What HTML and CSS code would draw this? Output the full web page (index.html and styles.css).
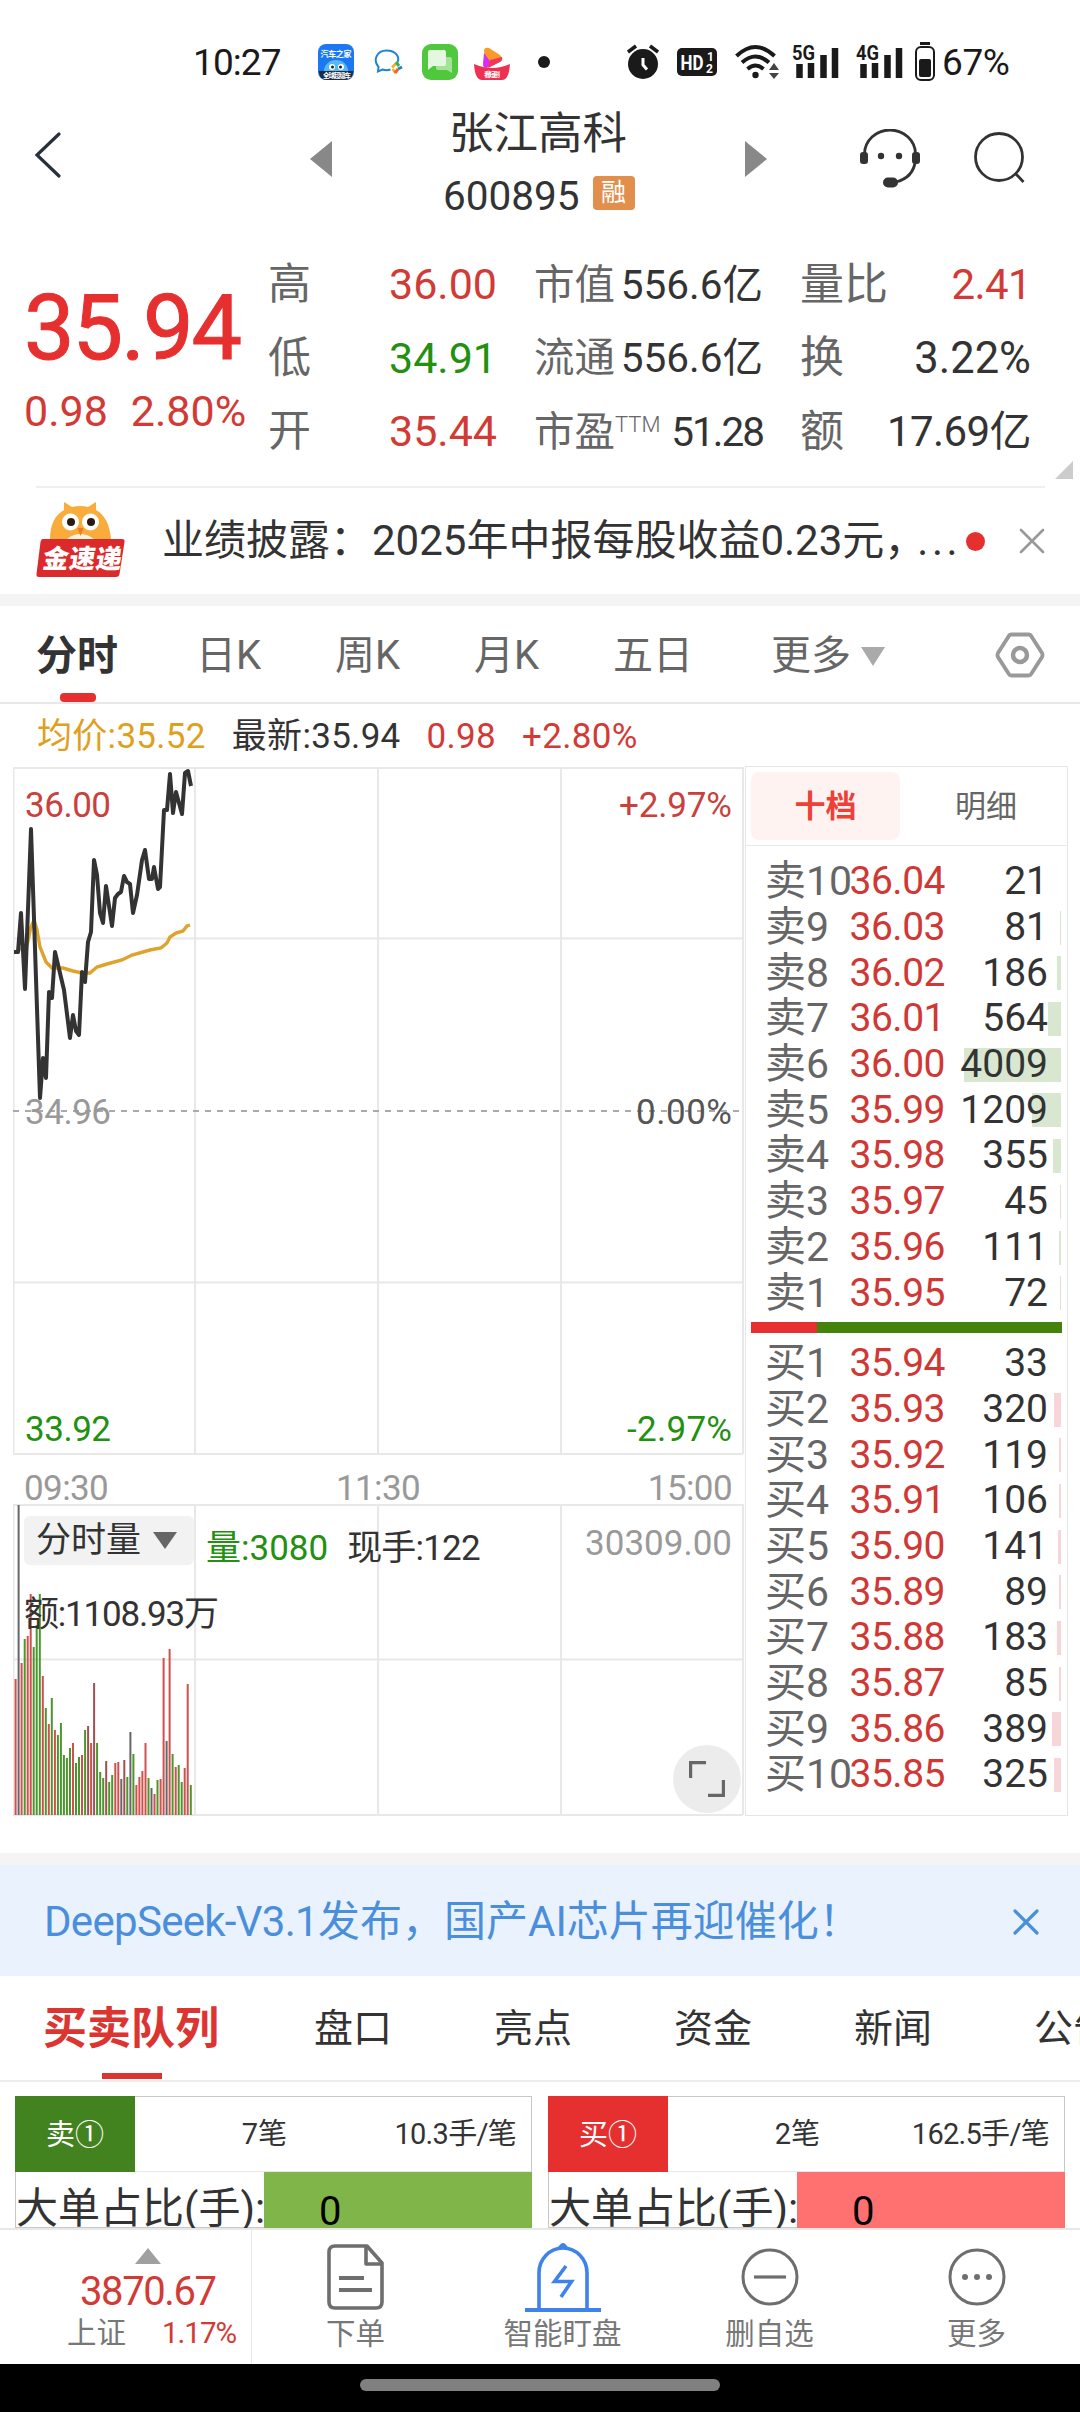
FILE: index.html
```html
<!DOCTYPE html>
<html lang="zh-CN">
<head>
    <meta charset="UTF-8">
    <meta name="viewport" content="width=device-width, initial-scale=1.0">
    <title>张江高科 600895</title>
    <link rel="stylesheet" href="styles.css">
</head>
<body>
    <div class="status">
        <span class="clock">10:27</span>
        <svg class="app1" width="36" height="36" viewBox="0 0 36 36">
            <rect width="36" height="36" rx="8" fill="#1b78f2"/>
            <text x="18" y="13" text-anchor="middle" font-size="8" font-weight="700" fill="#fff" textLength="31">汽车之家</text>
            <path d="M6 27a12 11 0 0 1 24 0z" fill="#58b9f2"/>
            <circle cx="14" cy="23" r="3" fill="#fff"/><circle cx="23" cy="23" r="3" fill="#fff"/>
            <circle cx="14.500" cy="23" r="1.500" fill="#123"/><circle cx="22.500" cy="23" r="1.500" fill="#123"/>
            <path d="M1 27h34v2q-1 7-8 7H9q-7 0-8-7z" fill="#1f2c40"/>
            <text x="19" y="33.500" text-anchor="middle" font-size="6.500" font-weight="700" fill="#fff" textLength="28">全球超级车</text>
        </svg>
        <svg class="app2" width="30" height="26" viewBox="0 0 30 26">
            <path d="M16.500 20.500q-4 1.500-8 0L4 22.500l.5-4.500C-1.500 11 3 1.500 12.500 1.500S26 8 23.500 13" fill="none" stroke="#1d84d4" stroke-width="2"/>
            <path d="M22 14.500l-4 4M18.500 20l3 4" stroke="#f2b01e" stroke-width="2.500"/>
            <path d="M22 13l3 4" stroke="#3cae46" stroke-width="3"/>
            <path d="M24 20l4-2" stroke="#1d84d4" stroke-width="3"/>
            <path d="M21 24l3-4" stroke="#f2652a" stroke-width="3"/>
        </svg>
        <svg class="app3" width="36" height="36" viewBox="0 0 36 36">
            <rect width="36" height="36" rx="9" fill="#4fc83d"/>
            <path d="M16 13h12q2 0 2 2v14l-5-3h-9q-2 0-2-2v-9q0-2 2-2z" fill="#a3e398"/>
            <path d="M8 6h14q2 0 2 2v12q0 2-2 2H11l-5 4V8q0-2 2-2z" fill="#e3f8df"/>
        </svg>
        <svg class="app4" width="36" height="36" viewBox="0 0 36 36">
            <path d="M10 7q0-4 5-3l11 7q4 4 0 7l-14 6z" fill="#fb9a27"/>
            <path d="M10 9l9 12-7 3q-3 0-3-4z" fill="#d72ff0"/>
            <path d="M16 16l12-3q1 3-2 5l-12 6z" fill="#f2385a"/>
            <path d="M0 20q18 8 36 0-1 16-8 16H8Q1 36 0 20z" fill="#ee3150"/>
            <text x="18" y="33" text-anchor="middle" font-size="6.500" font-weight="700" fill="#fff" textLength="16">看短剧</text>
        </svg>
        <i class="more-dot"></i>
        <svg class="alarm" width="32" height="36" viewBox="0 0 32 36">
            <circle cx="16" cy="20" r="15" fill="#1a1a1a"/>
            <path d="M1 8l8-6M31 8l-8-6" stroke="#1a1a1a" stroke-width="3.500"/>
            <path d="M16 14v7l4 4.500" fill="none" stroke="#fff" stroke-width="3"/>
        </svg>
        <svg class="hd" width="40" height="28" viewBox="0 0 40 28">
            <rect width="40" height="28" rx="5" fill="#1a1a1a"/>
            <text x="3.500" y="21.500" font-size="20" font-weight="700" fill="#fff" textLength="23" lengthAdjust="spacingAndGlyphs">HD</text>
            <text x="30" y="13" font-size="12" font-weight="700" fill="#fff">1</text>
            <text x="29" y="25" font-size="12" font-weight="700" fill="#fff">2</text>
        </svg>
        <svg class="wifi" width="46" height="36" viewBox="0 0 46 36">
            <g fill="none" stroke="#1a1a1a" stroke-width="4">
                <path d="M1.500 12q19-18 38 0"/>
                <path d="M7 18.500q13.500-12 27 0"/>
                <path d="M12.500 25q8-7 16 0"/>
            </g>
            <circle cx="20.500" cy="31" r="3.200" fill="#1a1a1a"/>
            <path d="M39 19l5 7H34zM39 35l5-6H34z" fill="#444"/>
        </svg>
        <svg class="cell" width="48" height="44" viewBox="0 -4 48 44">
            <text x="0" y="16" font-size="20" font-weight="700" fill="#1a1a1a" textLength="23" lengthAdjust="spacingAndGlyphs">5G</text>
            <path d="M7.500 34V20M19 34V19M31.500 34V11M43 34V4" stroke="#1a1a1a" stroke-width="6.500"/>
        </svg>
        <svg class="cell" width="48" height="44" viewBox="0 -4 48 44">
            <text x="0" y="16" font-size="20" font-weight="700" fill="#1a1a1a" textLength="23" lengthAdjust="spacingAndGlyphs">4G</text>
            <path d="M7.500 34V20M19 34V19M31.500 34V11M43 34V4" stroke="#1a1a1a" stroke-width="6.500"/>
        </svg>
        <svg class="battery" width="20" height="40" viewBox="0 0 20 40">
            <path d="M5 1.500h10" stroke="#1a1a1a" stroke-width="3"/>
            <rect x="1" y="5" width="18" height="33" rx="5" fill="none" stroke="#1a1a1a" stroke-width="2"/>
            <rect x="4" y="17" width="12" height="18" rx="2" fill="#1a1a1a"/>
        </svg>
        <span class="percent">67%</span>
    </div>

    <header class="header">
        <svg class="back" width="28" height="48" viewBox="0 0 28 48"><path d="M25 3L3 24l22 21" fill="none" stroke="#28303c" stroke-width="3.200" stroke-linecap="round"/></svg>
        <svg class="prev" width="22" height="36" viewBox="0 0 22 36"><path d="M22 0v36L0 18z" fill="#888"/></svg>
        <div class="title">
            <h1>张江高科</h1>
            <p>600895<span class="badge">融</span></p>
        </div>
        <svg class="next" width="22" height="36" viewBox="0 0 22 36"><path d="M0 0v36l22-18z" fill="#888"/></svg>
        <svg class="headset" width="60" height="60" viewBox="0 0 60 60">
            <path d="M4.500 25a25.500 24 0 0 1 51 0v6q-2 18-20 22" fill="none" stroke="#333" stroke-width="2.800"/>
            <rect x="0" y="23" width="8" height="12" rx="3" fill="#333"/><rect x="52" y="23" width="8" height="12" rx="3" fill="#333"/>
            <circle cx="21" cy="27" r="3.200" fill="#333"/><circle cx="39" cy="27" r="3.200" fill="#333"/>
            <rect x="23" y="48.500" width="15" height="10" rx="5" fill="#333"/>
        </svg>
        <svg class="search" width="52" height="54" viewBox="0 0 52 54">
            <circle cx="25" cy="25" r="23.500" fill="none" stroke="#333" stroke-width="2.800"/>
            <path d="M41 41l8.500 9" stroke="#333" stroke-width="2.800"/>
        </svg>
    </header>

    <section class="quote">
        <div class="price">
            <strong>35.94</strong>
            <p><span>0.98</span><span>2.80%</span></p>
        </div>
        <dl class="col1">
            <div><dt>高</dt><dd class="up">36.00</dd></div>
            <div><dt>低</dt><dd class="down">34.91</dd></div>
            <div><dt>开</dt><dd class="up">35.44</dd></div>
        </dl>
        <dl class="col2">
            <div><dt>市值</dt><dd>556.6亿</dd></div>
            <div><dt>流通</dt><dd>556.6亿</dd></div>
            <div><dt>市盈<sup>TTM</sup></dt><dd class="tight">51.28</dd></div>
        </dl>
        <dl class="col3">
            <div><dt>量比</dt><dd class="up">2.41</dd></div>
            <div><dt>换</dt><dd class="wide">3.22%</dd></div>
            <div><dt>额</dt><dd>17.69亿</dd></div>
        </dl>
        <i class="corner"></i>
    </section>

    <section class="news">
        <svg class="owl" width="90" height="78" viewBox="0 0 90 78">
            <path d="M14 37Q14 16 28 8V0l8 5q9-2 16 0l8-5v8q13 7 15 29z" fill="#f9ac3b"/>
            <path d="M31 37q13-10 27 0z" fill="#fff4dc"/>
            <circle cx="34.500" cy="20" r="8.500" fill="#fff"/><circle cx="54.500" cy="20" r="8.500" fill="#fff"/>
            <circle cx="35" cy="20" r="4" fill="#2c1a10"/><circle cx="55" cy="20" r="4" fill="#2c1a10"/>
            <path d="M41.500 26h6l-3 8z" fill="#ee7c22"/>
            <path d="M7 37h79q3 0 2.500 3l-5 32q-.5 3-3.500 3H3q-3 0-2.500-3l4-32q.5-3 2.500-3z" fill="#dc2a2c"/>
            <text x="15" y="66" font-size="26" font-weight="900" fill="#fff" textLength="79" transform="skewX(-8)">金速递</text>
        </svg>
        <p>业绩披露：2025年中报每股收益0.23元，<span>...</span></p>
        <i class="red-dot"></i>
        <svg class="close" width="26" height="26" viewBox="0 0 26 26"><path d="M2 2l22 22M24 2L2 24" stroke="#999" stroke-width="2.600" stroke-linecap="round"/></svg>
    </section>

    <nav class="periods">
        <a class="active">分时</a>
        <a>日K</a>
        <a>周K</a>
        <a>月K</a>
        <a>五日</a>
        <a class="more">更多<svg width="24" height="19" viewBox="0 0 24 19"><path d="M0 0h24L12 19z" fill="#aaa"/></svg></a>
        <svg class="gear" width="50" height="46" viewBox="0 0 50 46">
            <path d="M16.500 2.500h17q2 0 3 2L47 21q1 2 0 4L36.500 41.500q-1 2-3 2h-17q-2 0-3-2L3 25q-1-2 0-4L13.500 4.500q1-2 3-2z" fill="none" stroke="#999" stroke-width="3.800"/>
            <circle cx="25" cy="23" r="7" fill="none" stroke="#999" stroke-width="4.500"/>
        </svg>
    </nav>

    <div class="legend">
        <span class="avg">均价:35.52</span>
        <span>最新:35.94</span>
        <span class="up">0.98</span>
        <span class="up">+2.80%</span>
    </div>

    <main class="market">
        <div class="charts">
            <!-- price chart -->
            <svg width="732" height="688" viewBox="0 0 732 688">
                <path d="M0 1h730M0 171.500h730M0 515.500h730M0 687h730M.5 0v687M182 0v687M365 0v687M548 0v687M730 0v687" stroke="#e8e8e8" stroke-width="2" fill="none"/>
                <path d="M0 344h730" stroke="#aaa" stroke-width="2" stroke-dasharray="6 6"/>
                <polyline points="7,182 14,177 18,159 21,152 24,162 27,179 33,194 39,200 50,200 60,203 69,205 77,205 84,199 94,196 109,192 119,187 137,182 148,180 154,175 157,169 163,165 170,163 174,158 177,157" transform="translate(0 1)" fill="none" stroke="#dfa32c" stroke-width="3.400"/>
                <polyline points="1,184 5,184 8,145 12,221 18,61 27,330 30,290 33,310 36,224 39,230 42,184 51,222 57,270 60,247 63,263 66,267 69,204 72,214 75,174 78,164 81,92 84,107 87,145 90,155 93,118 99,158 102,130 105,126 108,124 111,108 114,114 117,116 120,145 124,127 129,92 132,82 136,111 139,111 141,99 145,121 147,119 151,42 154,42 157,6 160,45 163,24 169,46 172,5 175,3 178,18" transform="translate(0 1)" fill="none" stroke="#333" stroke-width="4" stroke-linejoin="round"/>
                <text class="up" x="12" y="50" textLength="86">36.00</text>
                <text class="up" x="719" y="50" text-anchor="end" textLength="113">+2.97%</text>
                <text class="grey" x="12" y="357" textLength="86">34.96</text>
                <text x="719" y="357" text-anchor="end" textLength="96">0.00%</text>
                <text class="down" x="12" y="674" textLength="86">33.92</text>
                <text class="down" x="719" y="674" text-anchor="end" textLength="105">-2.97%</text>
            </svg>
            <div class="times"><span>09:30</span><span>11:30</span><span>15:00</span></div>
            <!-- volume chart -->
            <div class="volume">
                <svg width="732" height="312" viewBox="0 0 732 312">
                    <path d="M0 1h730M0 155.500h730M0 311h730M.5 0v311M182 0v311M365 0v311M548 0v311M730 0v311" stroke="#e8e8e8" stroke-width="2" fill="none"/>
                    <g id="bars"></g>
                </svg>
                <div class="vol-head">
                    <span class="picker">分时量<svg width="24" height="17" viewBox="0 0 24 17"><path d="M0 0h24L12 17z" fill="#666"/></svg></span>
                    <span class="down">量:3080</span>
                    <span class="hand">现手:122</span>
                    <span class="max">30309.00</span>
                </div>
                <p class="amount">额:1108.93万</p>
                <span class="expand"><svg width="36" height="36" viewBox="0 0 36 36"><path d="M1.500 17V1.500H17M34.500 19v15.500H19" fill="none" stroke="#666" stroke-width="3.400"/></svg></span>
            </div>
        </div>

        <aside class="book">
            <div class="book-tabs"><b>十档</b><span>明细</span></div>
            <div class="rows" id="sell"></div>
            <div class="ratio"><i></i></div>
            <div class="rows" id="buy"></div>
        </aside>
    </main>

    <section class="banner">
        <p><span>DeepSeek-V3.1</span>发布，国产AI芯片再迎催化！</p>
        <svg width="26" height="26" viewBox="0 0 26 26"><path d="M2 2l22 22M24 2L2 24" stroke="#4b8fdc" stroke-width="3.200" stroke-linecap="round"/></svg>
    </section>

    <nav class="tabs">
        <a class="active">买卖队列</a>
        <a>盘口</a>
        <a>亮点</a>
        <a>资金</a>
        <a>新闻</a>
        <a>公告</a>
    </nav>

    <section class="queues">
        <div class="queue sell">
            <div class="queue-head"><b>卖①</b><span>7笔</span><em>10.3手/笔</em></div>
            <div class="queue-big"><p>大单占比(手):</p><span>0</span></div>
        </div>
        <div class="queue buy">
            <div class="queue-head"><b>买①</b><span>2笔</span><em>162.5手/笔</em></div>
            <div class="queue-big"><p>大单占比(手):</p><span>0</span></div>
        </div>
    </section>

    <footer class="toolbar">
        <div class="index">
            <svg width="26" height="16" viewBox="0 0 26 16"><path d="M13 0l13 16H0z" fill="#a0a0a0"/></svg>
            <strong>3870.67</strong>
            <p><span>上证</span><em>1.17%</em></p>
        </div>
        <a>
            <svg width="76" height="70" viewBox="0 0 76 70">
                <g fill="none" stroke="#6e6e6e" stroke-width="3.600" stroke-linejoin="round">
                    <path d="M17 4h32l15 17v39q0 6-6 6H17q-6 0-6-6V10q0-6 6-6z"/>
                    <path d="M48 4v18h16"/>
                    <path d="M21 36h25M21 48h33" stroke-width="4"/>
                </g>
            </svg>下单
        </a>
        <a>
            <svg width="76" height="70" viewBox="0 0 76 70">
                <path d="M34 6q4-8 8 0z" fill="#3f83ea" stroke="#3f83ea" stroke-width="2"/>
                <path d="M14 67V31a24 25 0 0 1 48 0v36" fill="none" stroke="#3f83ea" stroke-width="3.600"/>
                <path d="M0 68h76" stroke="#3f83ea" stroke-width="4"/>
                <path d="M41 24L29.500 39.500h17L36 55" fill="none" stroke="#3f83ea" stroke-width="3.600"/>
            </svg>智能盯盘
        </a>
        <a>
            <svg width="76" height="70" viewBox="0 0 76 70">
                <circle cx="38" cy="35" r="27" fill="none" stroke="#6e6e6e" stroke-width="3"/>
                <path d="M22 35h32" stroke="#6e6e6e" stroke-width="3.200"/>
            </svg>删自选
        </a>
        <a>
            <svg width="76" height="70" viewBox="0 0 76 70">
                <circle cx="38" cy="35" r="27" fill="none" stroke="#6e6e6e" stroke-width="3"/>
                <g fill="#6e6e6e"><circle cx="26" cy="35" r="3"/><circle cx="38" cy="35" r="3"/><circle cx="50" cy="35" r="3"/></g>
            </svg>更多
        </a>
    </footer>
    <div class="gesture"><i></i></div>

    <script src="script.js"></script>
</body>
</html>
```
FILE: styles.css
```css
* {
    box-sizing: border-box;
    margin: 0;
    padding: 0;
}

body {
    width: 1080px;
    height: 2412px;
    overflow: hidden;
    background: #fff;
    color: #333;
    font-family: Roboto, "Noto Sans CJK SC", sans-serif;
    line-height: 1;
}

svg {
    display: block;
    flex-shrink: 0;
}

i, em {
    font-style: normal;
}

.up { color: #d23a36; fill: #d23a36; }
.down { color: #23900f; fill: #23900f; }

/* status bar */
.status {
    display: flex;
    align-items: center;
    height: 96px;
    padding: 28px 0 0 193px;
    color: #1a1a1a;
    font-size: 37px;
}

.clock { width: 125px; letter-spacing: -0.9px; }
.app2 { margin-left: 20px; }
.app3 { margin-left: 18px; }
.app4 { margin-left: 16px; }

.more-dot {
    width: 12px;
    height: 12px;
    margin-left: 28px;
    border-radius: 50%;
    background: #1a1a1a;
}

.alarm { margin-left: 77px; }
.hd { margin-left: 18px; }
.wifi { margin-left: 18px; }
.cell { margin-left: 11px; margin-right: 5px; }
.battery { margin-left: 6px; }
.percent { margin-left: 7px; letter-spacing: -0.4px; }

/* header */
.header {
    display: flex;
    align-items: flex-start;
    height: 134px;
}

.back { margin: 35px 0 0 34px; }
.prev { margin: 45px 0 0 248px; }
.next { margin: 45px 0 0 106px; }
.headset { margin: 33px 0 0 93px; }
.search { margin: 36px 0 0 54px; }

.title {
    width: 196px;
    margin: 13px 0 0 111px;
}

.title h1 {
    padding-left: 6px;
    font-size: 44.5px;
    font-weight: 400;
    line-height: 50px;
}

.title p {
    display: flex;
    align-items: center;
    margin-top: 17px;
    font-size: 40.5px;
    line-height: 40px;
}

.badge {
    width: 42px;
    height: 34px;
    margin: -6px 0 0 13px;
    border-radius: 4px;
    background: #e28f4e;
    color: #fff;
    font-size: 25px;
    line-height: 33px;
    text-align: center;
}

/* quote */
.quote {
    position: relative;
    display: flex;
    height: 256px;
    padding: 18px 0 0 24px;
}

.price {
    width: 244px;
    color: #e63030;
}

.price strong {
    display: block;
    margin-top: 35px;
    font-size: 90px;
    font-weight: 400;
    line-height: 92px;
    letter-spacing: -2px;
    -webkit-text-stroke: 1px #e63030;
}

.price p {
    display: flex;
    gap: 23px;
    margin-top: 14px;
    color: #d23a36;
    font-size: 43px;
    line-height: 44px;
}

.quote dl div {
    display: flex;
    justify-content: space-between;
    align-items: center;
    height: 73.5px;
    font-size: 43px;
    white-space: nowrap;
}

.quote dt { color: #666; }
.quote .col1 { width: 229px; }
.quote .col2 { width: 229px; margin-left: 37px; }
.quote .col3 { width: 231px; margin-left: 37px; }
.quote .col2 div { font-size: 40.5px; }
.quote .col3 div { font-size: 44px; }
.quote .col3 dd { font-size: 42px; letter-spacing: -0.6px; }
.quote .col3 dd.wide { font-size: 43.5px; letter-spacing: 0; }
.quote dd.tight { letter-spacing: -2px; }

.quote sup {
    font-size: 22px;
    font-weight: 300;
    vertical-align: 14px;
    line-height: 0;
}

.corner {
    position: absolute;
    right: 7px;
    bottom: 7px;
    border-left: 18px solid transparent;
    border-bottom: 18px solid #ccc;
}

/* news line */
.news {
    display: flex;
    align-items: center;
    height: 108px;
    margin: 0 35px 0 36px;
    border-top: 2px solid #efefef;
}

.news p {
    width: 804px;
    margin-left: 36px;
    font-size: 42px;
    white-space: nowrap;
}

.news p span {
    margin-left: -9px;
    letter-spacing: 3.5px;
}

.red-dot {
    width: 19px;
    height: 19px;
    border-radius: 50%;
    background: #e63030;
}

.close { margin-left: 34px; }

/* period tabs */
.periods {
    display: flex;
    align-items: center;
    height: 110px;
    padding: 1px 0 0 36px;
    border-top: 12px solid #f4f4f4;
    border-bottom: 2px solid #e8e8e8;
    color: #666;
    font-size: 40px;
}

.periods a {
    width: 139px;
    padding-top: 3px;
}

.periods a.active {
    position: relative;
    width: 160px;
    color: #333;
    font-size: 41px;
    font-weight: 700;
}

.periods a.active::after {
    content: "";
    position: absolute;
    left: 24px;
    bottom: -25px;
    width: 36px;
    height: 9px;
    border-radius: 4px;
    background: #e63030;
}

.periods a:nth-child(5) { width: 158px; }

.periods .more {
    display: flex;
    align-items: center;
    gap: 10px;
    width: 224px;
}

.legend {
    display: flex;
    align-items: center;
    height: 63px;
    padding: 2px 0 0 37px;
    font-size: 35px;
}

.legend span { margin-right: 26px; letter-spacing: 0.3px; }
.legend .avg { color: #dfa020; }

/* charts and order book */
.market {
    display: flex;
    height: 1086px;
    padding-left: 13px;
}

.charts {
    width: 732px;
}

.charts svg text {
    fill: #555;
    font-size: 35px;
}

.charts svg text.up { fill: #c9403c; }
.charts svg text.down { fill: #23900f; }
.charts svg text.grey { fill: #999; }

.times {
    display: flex;
    justify-content: space-between;
    align-items: center;
    height: 49px;
    padding: 18px 13px 0 11px;
    color: #999;
    font-size: 35px;
    letter-spacing: -0.6px;
}

.volume {
    position: relative;
    height: 312px;
}

.volume > svg {
    position: absolute;
    inset: 0;
}

.vol-head {
    position: relative;
    display: flex;
    align-items: center;
    padding: 11px 11px 0;
    font-size: 35px;
}

.picker {
    display: flex;
    align-items: center;
    gap: 12px;
    width: 170px;
    height: 49px;
    padding-left: 12px;
    border-radius: 6px;
    background: #f2f2f2;
}

.vol-head .down { margin: 16px 0 0 12px; }
.hand { margin: 16px 0 0 19px; letter-spacing: -0.8px; }

.max {
    margin: 5px 2px 0 auto;
    color: #999;
}

.amount {
    position: relative;
    margin: 31px 0 0 11px;
    font-size: 35px;
    letter-spacing: -1.2px;
}

.expand {
    position: absolute;
    right: 4px;
    bottom: 3px;
    display: grid;
    place-items: center;
    width: 68px;
    height: 68px;
    border-radius: 50%;
    background: #ececec;
}

.book {
    width: 323px;
    height: 1050px;
    margin-top: -1px;
    border: 1px solid #e6e6e6;
}

.book-tabs {
    display: flex;
    height: 79px;
    padding: 5px 5px;
    border-bottom: 1px solid #e8e8e8;
    font-size: 31px;
    line-height: 70px;
    text-align: center;
}

.book-tabs b {
    width: 149px;
    border-radius: 8px;
    background: #fff3f2;
    color: #ee4038;
}

.book-tabs span {
    flex: 1;
    margin-left: 10px;
    color: #666;
}

.rows {
    width: 310px;
    margin: 13px 0 0 5px;
}

.row {
    position: relative;
    display: grid;
    grid-template-columns: 79px 101px 103px;
    align-items: center;
    height: 45.7px;
    padding-left: 14px;
    font-size: 39px;
    text-align: right;
}

.row span {
    position: relative;
    color: #666;
    font-size: 41px;
    text-align: left;
    white-space: nowrap;
}

.row b {
    position: relative;
    color: #cf3834;
    font-weight: 400;
    letter-spacing: -0.5px;
}

.row em {
    position: relative;
}

/* depth bar behind the quantity */
.row i {
    position: absolute;
    top: 6px;
    right: 0;
    height: 34px;
}

#sell i { background: #d9e7d0; }
#buy i { background: #f8d5d8; }

.ratio {
    height: 11px;
    margin: 6px 5px -5px;
    background: #44820c;
}

.ratio i {
    display: block;
    width: 66px;
    height: 11px;
    background: #e63030;
}

/* banner */
.banner {
    display: flex;
    justify-content: space-between;
    align-items: center;
    height: 123px;
    padding: 2px 41px 0 44px;
    border-top: 12px solid #f4f4f4;
    background: #eaf3fd;
    color: #4b8fdc;
    font-size: 42px;
}

.banner span { letter-spacing: -0.7px; }

/* section tabs */
.tabs {
    display: flex;
    align-items: center;
    height: 106px;
    padding: 2px 0 0 43px;
    overflow: hidden;
    border-bottom: 2px solid #ececec;
    font-size: 39px;
    white-space: nowrap;
}

.tabs a { width: 180px; flex-shrink: 0; }

.tabs a.active {
    position: relative;
    width: 271px;
    color: #dc3431;
    font-size: 44px;
    font-weight: 700;
}

.tabs a.active::after {
    content: "";
    position: absolute;
    left: 59px;
    bottom: -28px;
    width: 60px;
    height: 6px;
    background: #dc3431;
}

/* order queues */
.queues {
    display: flex;
    gap: 16px;
    height: 146px;
    padding: 14px 15px 0;
    overflow: hidden;
}

.queue {
    width: 517px;
    border: 1px solid #c8c8c8;
}

.queue-head {
    display: flex;
    align-items: center;
    height: 76px;
    margin: -1px 0 0 -1px;
    padding-right: 15px;
    border-bottom: 1px solid #e8e8e8;
    font-size: 29px;
}

.queue-head b {
    width: 120px;
    height: 76px;
    color: #fff;
    font-weight: 400;
    line-height: 78px;
    text-align: center;
}

.queue-head span {
    width: 152px;
    padding-top: 2px;
    text-align: right;
}

.queue-head em {
    margin-left: auto;
    padding-top: 2px;
    letter-spacing: -0.7px;
}

.queue-big {
    display: flex;
    height: 62px;
}

.queue-big p {
    width: 248px;
    font-size: 42px;
    line-height: 73px;
    white-space: nowrap;
}

.queue-big span {
    flex: 1;
    margin-right: -1px;
    padding-left: 55px;
    color: #000;
    font-size: 40px;
    line-height: 80px;
}

.sell .queue-head b { background: #43831f; }
.sell .queue-big span { background: #80b549; }
.buy .queue-head b { background: #e63030; }
.buy .queue-big span { background: #ff7070; }

/* bottom toolbar */
.toolbar {
    display: flex;
    height: 136px;
    border-top: 2px solid #e8e8e8;
    background: #fff;
    color: #777;
    font-size: 29.5px;
}

.index {
    width: 252px;
    padding-top: 18px;
    border-right: 1px solid #e8e8e8;
}

.index svg { margin-left: 135px; }

.index strong {
    display: block;
    margin: 8px 0 0 80px;
    color: #d23a36;
    font-size: 40px;
    font-weight: 400;
    letter-spacing: -1.4px;
}

.index p {
    display: flex;
    gap: 36px;
    margin: 7px 0 0 67px;
}

.index em {
    color: #d23a36;
    letter-spacing: -1px;
}

.toolbar a {
    display: flex;
    flex-direction: column;
    align-items: center;
    gap: 8px;
    width: 207px;
    padding-top: 12px;
}

.gesture {
    height: 48px;
    padding-top: 15px;
    background: #000;
}

.gesture i {
    display: block;
    width: 360px;
    height: 12px;
    margin: 0 auto;
    border-radius: 6px;
    background: #808080;
}
```
FILE: script.js
```js
// [price, quantity, depth bar width]
let sell = [
    ["36.04", 21, 0], ["36.03", 81, 1], ["36.02", 186, 4], ["36.01", 564, 13], ["36.00", 4009, 97],
    ["35.99", 1209, 29], ["35.98", 355, 8], ["35.97", 45, 1], ["35.96", 111, 2], ["35.95", 72, 1]
];
let buy = [
    ["35.94", 33, 0], ["35.93", 320, 7], ["35.92", 119, 2], ["35.91", 106, 2], ["35.90", 141, 3],
    ["35.89", 89, 2], ["35.88", 183, 4], ["35.87", 85, 2], ["35.86", 389, 9], ["35.85", 325, 7]
];

function row(label, item) {
    return `<div class="row"><i style="width:${item[2]}px"></i><span>${label}</span><b>${item[0]}</b><em>${item[1]}</em></div>`;
}

document.getElementById("sell").innerHTML = sell.map((item, n) => row("卖" + (10 - n), item)).join("");
document.getElementById("buy").innerHTML = buy.map((item, n) => row("买" + (n + 1), item)).join("");

// bar heights per minute, r = up, g = down, k = flat, m = mixed
let volume = "r136 k310 r152 g176 r179 r221 g168 g190 g221 r139 g107 r91 g117 r85 g80 g92 g60 g57 g67 r72 g52 g58 r60 g85 m89 r72 m132 g72 g43 g37 m54 g33 g40 r52 r53 k36 m55 g38 k83 g61 r30 r38 r44 r72 g37 k27 r21 g35 r36 r157 k74 r166 g61 r48 g50 g33 r47 r131 g30";
let colors = { r: "#d0504d", g: "#4c962f", k: "#666", m: "#a05050" };

document.getElementById("bars").innerHTML = volume.split(" ").map((bar, n) => {
    let h = Number(bar.slice(1));
    let x = (1.6 + n * 3.02).toFixed(1);
    return `<rect x="${x}" y="${311 - h}" width="2" height="${h}" fill="${colors[bar[0]]}"/>`;
}).join("");
```
